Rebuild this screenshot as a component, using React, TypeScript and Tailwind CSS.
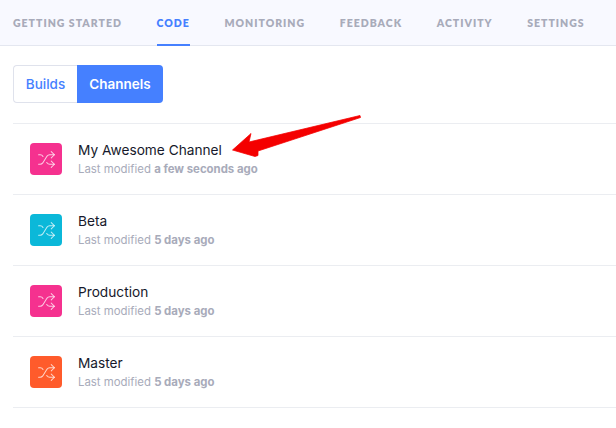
import { Shuffle } from 'lucide-react';

const tabs = ['Getting Started', 'Code', 'Monitoring', 'Feedback', 'Activity', 'Settings'];

const channels = [
  { name: 'My Awesome Channel', modified: 'a few seconds ago', color: 'bg-[#f5318f]' },
  { name: 'Beta', modified: '5 days ago', color: 'bg-[#0bb8d9]' },
  { name: 'Production', modified: '5 days ago', color: 'bg-[#f5318f]' },
  { name: 'Master', modified: '5 days ago', color: 'bg-[#ff5b2b]' },
];

const App = () => {
  return (
    <div className="relative h-[428px] w-[616px] overflow-hidden bg-white font-['Inter',sans-serif]">
      {/* Tabs */}
      <nav className="flex h-[46px] gap-[34.6px] border-b border-[#e4e7f0] bg-[#f8f9ff] pl-[13px]">
        {tabs.map((tab) => (
          <div
            key={tab}
            className={`flex h-[46px] items-center whitespace-nowrap border-b-2 pt-[3px] font-['Lato',sans-serif] text-[10.5px] font-extrabold uppercase tracking-[1px] ${
              tab === 'Code' ? 'border-[#4580ff] text-[#4580ff]' : 'border-transparent text-[#a8abba]'
            }`}
          >
            {tab}
          </div>
        ))}
      </nav>

      {/* Builds / Channels toggle */}
      <div className="ml-[13px] mt-[19px] flex h-[38px] w-[150px] text-[13.5px] font-medium">
        <div className="flex w-[64px] items-center justify-center rounded-l border border-r-0 border-[#dfe2ec] text-[#4580ff]">
          Builds
        </div>
        <div className="flex flex-1 items-center justify-center rounded-r bg-[#4580ff] font-semibold text-white">
          Channels
        </div>
      </div>

      {/* Channel list */}
      <ul className="ml-[13px] mt-5 border-t border-[#ebedf1]">
        {channels.map((channel) => (
          <li key={channel.name} className="flex h-[71px] items-center gap-4 border-b border-[#ebedf1] pl-[17px]">
            <div className={`flex h-8 w-8 items-center justify-center rounded ${channel.color}`}>
              <Shuffle size={19} strokeWidth={1.3} className="text-white/75" />
            </div>
            <div>
              <div className="text-[13.7px] leading-[19px] text-[#16192b]">{channel.name}</div>
              <div className="text-[11.4px] leading-[18px] text-[#a8abba]">
                Last modified <span className="font-bold">{channel.modified}</span>
              </div>
            </div>
          </li>
        ))}
      </ul>

      {/* Annotation arrow */}
      <svg className="absolute left-[225px] top-[110px]" width="140" height="52" viewBox="0 0 140 52">
        <path
          d="M7.500 40 L26 23.500 L24 32 L135 5.500 L135.500 7.500 L33 41 L33 45.500 L30 46.500 Z"
          fill="#f40000"
          stroke="#f40000"
          strokeWidth="0.75"
          strokeLinejoin="round"
        />
      </svg>
    </div>
  );
};

export default App;
